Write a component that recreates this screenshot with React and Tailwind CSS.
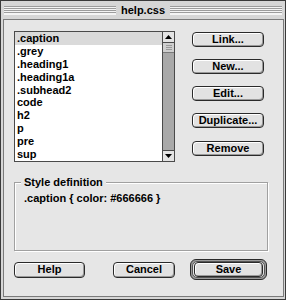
import React from 'react';

const ITEMS = ['.caption', '.grey', '.heading1', '.heading1a', '.subhead2', 'code', 'h2', 'p', 'pre', 'sup'];

const font = { fontFamily: '"Liberation Sans", Arial, sans-serif' };

function Btn({ children, className = '' }) {
  return (
    <div
      className={`flex items-center justify-center border border-[#2a2a2a] rounded-[4px] bg-[#e2e2e2] shadow-[inset_1px_1px_0_#ffffff,inset_-1px_-1px_0_#9a9a9a] text-[11px] font-bold text-black leading-none ${className}`}
    >
      {children}
    </div>
  );
}

function Stripes() {
  return (
    <div className="flex-1 h-[9px] bg-[repeating-linear-gradient(to_bottom,#9c9c9c_0px,#9c9c9c_1px,#f4f4f4_1px,#f4f4f4_2px)] border-b border-[#f4f4f4]" />
  );
}

export default function App() {
  return (
    <div style={font} className="w-[286px] h-[300px] bg-white">
      <div className="w-[286px] h-[300px] border border-[#3a3a3a] bg-[#d6d6d6] flex flex-col">
        {/* Title bar */}
        <div className="h-[18px] flex items-center px-[3px] gap-[4px] shrink-0">
          <Stripes />
          <div className="text-[11px] font-bold text-black leading-none px-[1px]">help.css</div>
          <Stripes />
        </div>

        {/* Body */}
        <div className="flex-1 ml-[2px] mr-[1px] mb-[2px] border border-[#7a7a7a] bg-[#e6e6e6] pl-[10px] pt-[11px]">
          <div className="flex">
            {/* List */}
            <div className="w-[161px] h-[131px] border border-[#4a4a4a] bg-white flex">
              <div className="flex-1">
                {ITEMS.map((item, i) => (
                  <div
                    key={item}
                    className={`h-[12.9px] leading-[12.9px] pl-[2px] text-[11px] font-bold text-black ${i === 0 ? 'bg-[#dadada]' : ''}`}
                  >
                    {item}
                  </div>
                ))}
              </div>
              <div className="w-[12px] border-l border-[#4a4a4a] bg-[#a9a9a9] flex flex-col">
                <div className="h-[11px] bg-[#e4e4e4] border-b border-[#4a4a4a] flex items-center justify-center">
                  <svg width="7" height="4" viewBox="0 0 7 4"><path d="M3.5 0 L7 4 L0 4 Z" fill="#000" /></svg>
                </div>
                <div className="h-[10px] bg-[#cfcfcf] border-b border-[#7a7a7a] flex flex-col items-center justify-center gap-[1px]">
                  <div className="w-[6px] h-px bg-[#9a9a9a]" />
                  <div className="w-[6px] h-px bg-[#9a9a9a]" />
                  <div className="w-[6px] h-px bg-[#9a9a9a]" />
                </div>
                <div className="flex-1" />
                <div className="h-[11px] bg-[#e4e4e4] border-t border-[#4a4a4a] flex items-center justify-center">
                  <svg width="7" height="4" viewBox="0 0 7 4"><path d="M0 0 L7 0 L3.5 4 Z" fill="#000" /></svg>
                </div>
              </div>
            </div>

            {/* Side buttons */}
            <div className="ml-[17px] pt-[1px] flex flex-col gap-[12px]">
              <Btn className="w-[72px] h-[15px]">Link...</Btn>
              <Btn className="w-[72px] h-[15px]">New...</Btn>
              <Btn className="w-[72px] h-[15px]">Edit...</Btn>
              <Btn className="w-[72px] h-[15px] mb-[1px]">Duplicate...</Btn>
              <Btn className="w-[72px] h-[15px]">Remove</Btn>
            </div>
          </div>

          {/* Style definition group */}
          <div className="relative mt-[20px] w-[254px] h-[69px] border border-[#a0a0a0] shadow-[1px_1px_0_#ffffff,inset_1px_1px_0_#ffffff]">
            <div className="absolute left-[6px] top-[-7px] px-[3px] bg-[#e6e6e6] text-[11px] font-bold text-black leading-[12px]">
              Style definition
            </div>
            <div className="pl-[9px] pt-[9px] text-[11px] font-bold text-black leading-[12px]">
              .caption {'{'} color: #666666 {'}'}
            </div>
          </div>

          {/* Bottom buttons */}
          <div className="mt-[8px] h-[21px] flex items-center">
            <Btn className="w-[71px] h-[16px]">Help</Btn>
            <Btn className="ml-[28px] w-[62px] h-[16px]">Cancel</Btn>
            <div className="ml-[15px] w-[77px] h-[21px] rounded-[6px] border border-[#2a2a2a] bg-[#9a9a9a] p-[1px]">
              <div className="w-full h-full rounded-[5px] border border-[#555] bg-[#e6e6e6] flex items-center justify-center">
                <Btn className="w-[69px] h-[15px]">Save</Btn>
              </div>
            </div>
          </div>
        </div>
      </div>
    </div>
  );
}
